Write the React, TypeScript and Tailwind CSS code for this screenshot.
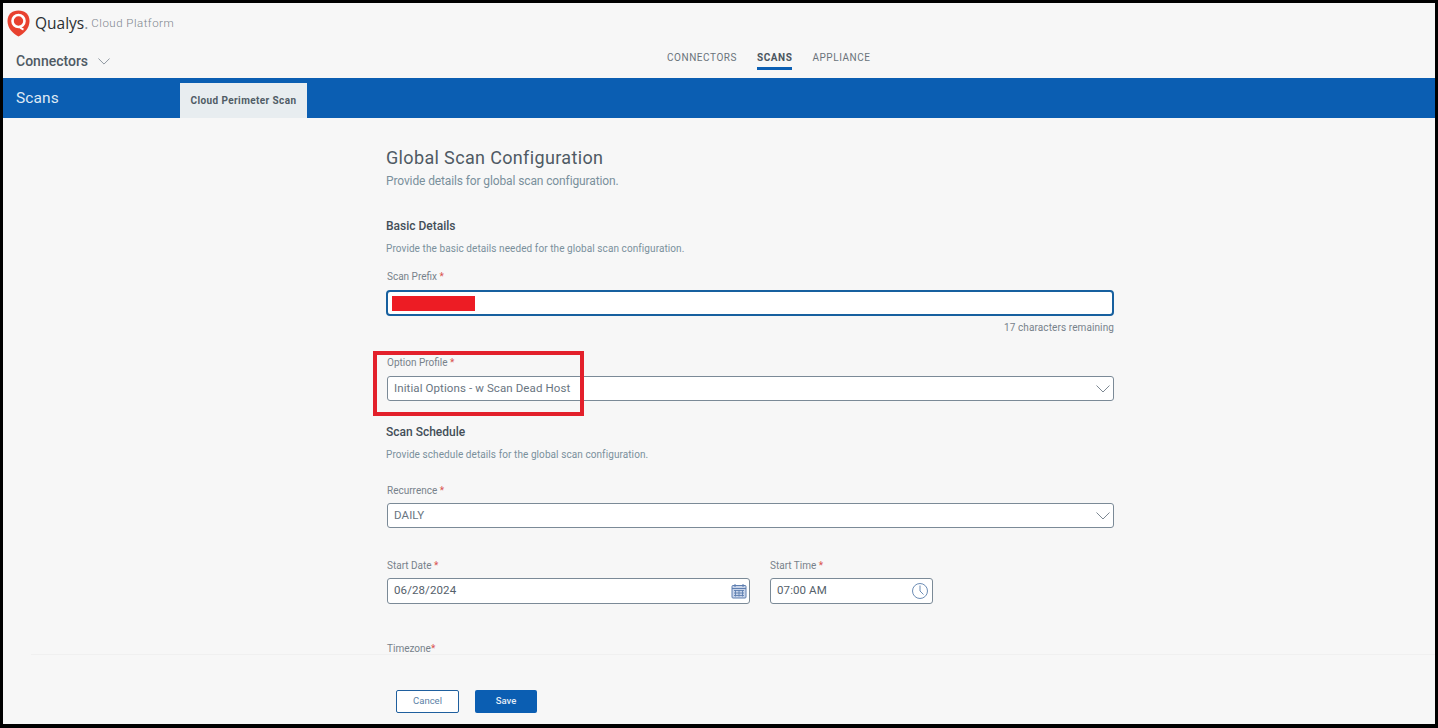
function Chevron({ w = 14, h = 8 }: { w?: number; h?: number }) {
  return (
    <svg width={w} height={h} viewBox="0 0 14 8" fill="none" stroke="#7d8892" strokeWidth="1">
      <path d="M0.500 0.500L7 7l6.500-6.500" />
    </svg>
  );
}

function Label({ text, star = ' *', inset = true }: { text: string; star?: string; inset?: boolean }) {
  return (
    <div className={inset ? 'h-[14px] pl-px text-[10px] leading-[14px] text-[#77828b]' : 'h-[14px] text-[10px] leading-[14px] text-[#77828b]'}>
      {text}
      <span className="text-[#d9534f]">{star}</span>
    </div>
  );
}

function SelectBox({ value }: { value: string }) {
  return (
    <div className="ml-px flex h-[25px] items-center justify-between rounded-[3px] border border-[#7b8a97] bg-white pl-[6px] pr-[3px] text-[11.500px] tracking-[0.1px] text-[#69757f]">
      <span>{value}</span>
      <Chevron />
    </div>
  );
}

function CalendarIcon() {
  return (
    <svg width="16" height="16" viewBox="0 0 16 16" fill="none" stroke="#5f7fb0" strokeWidth="1">
      <rect x="1" y="2.500" width="14" height="12.500" rx="1" fill="#c9d5ea" />
      <path d="M1 5.500h14M4 1v3M12 1v3" />
      <path d="M3 7.500h10M3 10h10M3 12.500h10M4.500 7v6.500M8 7v6.500M11.500 7v6.500" strokeWidth="0.9" />
    </svg>
  );
}

function ClockIcon() {
  return (
    <svg width="18" height="18" viewBox="0 0 18 18" fill="none" stroke="#6d8db5" strokeWidth="1">
      <circle cx="9" cy="9" r="7.500" />
      <path d="M9 3.500V9l3.500 3.500" />
    </svg>
  );
}

export default function App() {
  return (
    <div className="flex h-[728px] w-[1438px] flex-col overflow-hidden border-b-[4px] border-l-[3px] border-r-[3px] border-t-[3px] border-black bg-[#f7f7f7] font-['Roboto',sans-serif]">
      {/* Logo row */}
      <div className="flex h-[41px] items-center pl-[4px]">
        <svg width="23" height="27" viewBox="0 0 23 27">
          <path
            d="M11.500 0.500C5 0.500 0.500 4.500 0.500 11c0 7 5 12.500 11 15.500 6-3 11-8.500 11-15.500 0-6.500-4.500-10.500-11-10.500z"
            fill="#e8412f"
          />
          <circle cx="11.500" cy="11" r="6" fill="none" stroke="#fff" strokeWidth="2.600" />
          <path d="M12 16.500c1.500 1.500 3 2.500 4.500 3" stroke="#fff" strokeWidth="2" fill="none" />
        </svg>
        <span className="ml-[5px] text-[15.500px] font-medium leading-none text-[#2b2f33] font-['Open_Sans',sans-serif]">
          Qualys<span className="text-[#8a9299]">.</span>
        </span>
        <span className="ml-[3px] text-[11.500px] font-light leading-none tracking-[0.5px] text-[#7d868d]">
          Cloud Platform
        </span>
      </div>

      {/* Module row */}
      <div className="relative flex h-[34px] items-center pl-[13px]">
        <span className="text-[14px] font-medium text-[#4f5a64]">Connectors</span>
        <span className="ml-[10px]">
          <Chevron w={12} h={7} />
        </span>
        <nav className="absolute left-[664px] top-0 flex gap-[20px] text-[10px] tracking-[0.55px] text-[#6a737b]">
          <span className="h-[26px] pt-[6px]">CONNECTORS</span>
          <span className="h-[26px] border-b-[3px] border-[#0b5fb3] pt-[6px] font-bold text-[#4b5660]">SCANS</span>
          <span className="h-[26px] pt-[6px]">APPLIANCE</span>
        </nav>
      </div>

      {/* Blue bar */}
      <div className="flex h-[40px] items-end bg-[#0b5eb2] pl-[13px]">
        <span className="mb-[10px] w-[164px] text-[15.500px] leading-[20px] tracking-[0.1px] text-[#dfe9f5]">Scans</span>
        <div className="flex h-[35px] w-[127px] items-center justify-center bg-[#e8edf0] text-[10px] font-bold tracking-[0.4px] text-[#505c66]">
          Cloud Perimeter Scan
        </div>
      </div>

      {/* Form */}
      <main className="relative min-h-0 flex-1 overflow-hidden pl-[383px]">
        <div className="w-[728px] pt-[29px]">
          <h1 className="text-[18px] leading-[22px] tracking-[0.35px] text-[#4f5a64]">Global Scan Configuration</h1>
          <p className="mt-[5px] text-[12px] leading-[14px] tracking-[-0.12px] text-[#7a909c]">
            Provide details for global scan configuration.
          </p>

          <h2 className="mt-[30px] text-[12px] font-medium leading-[16px] text-[#434e57]">Basic Details</h2>
          <p className="mt-[8px] text-[10px] leading-[14px] tracking-[0.08px] text-[#7a909c]">
            Provide the basic details needed for the global scan configuration.
          </p>
          <div className="mt-[14px]">
            <Label text="Scan Prefix" />
          </div>
          <div className="mt-[6px] flex h-[26px] items-center rounded-[4px] border-2 border-[#17609f] bg-white pl-[4px]">
            <div className="h-[15px] w-[83px] bg-[#ed1c24]" />
          </div>
          <div className="mt-[5px] text-right text-[10px] leading-[14px] tracking-[0.1px] text-[#77828b]">
            17 characters remaining
          </div>

          <div className="mt-[21px]">
            <Label text="Option Profile" />
          </div>
          <div className="mt-[6px]">
            <SelectBox value="Initial Options - w Scan Dead Host" />
          </div>

          <h2 className="mt-[23px] text-[12px] font-medium leading-[16px] text-[#434e57]">Scan Schedule</h2>
          <p className="mt-[8px] text-[10px] leading-[14px] tracking-[0.08px] text-[#7a909c]">
            Provide schedule details for the global scan configuration.
          </p>

          <div className="mt-[22px]">
            <Label text="Recurrence" />
          </div>
          <div className="mt-[5px]">
            <SelectBox value="DAILY" />
          </div>

          <div className="mt-[31px] flex gap-[20px] pl-px">
            <div className="w-[363px]">
              <Label text="Start Date" inset={false} />
              <div className="mt-[5px] flex h-[26px] items-center justify-between rounded-[3px] border border-[#7b8a97] bg-white pl-[6px] pr-[2px] text-[11.500px] tracking-[0.1px] text-[#55616b]">
                <span>06/28/2024</span>
                <CalendarIcon />
              </div>
            </div>
            <div className="w-[163px]">
              <Label text="Start Time" inset={false} />
              <div className="mt-[5px] flex h-[26px] items-center justify-between rounded-[3px] border border-[#7b8a97] bg-white pl-[6px] pr-[3px] text-[11.500px] tracking-[0.1px] text-[#55616b]">
                <span>07:00 AM</span>
                <ClockIcon />
              </div>
            </div>
          </div>

          <div className="mt-[38px]">
            <Label text="Timezone" star="*" />
          </div>
        </div>

        {/* Red annotation */}
        <div className="absolute left-[370px] top-[233px] h-[65px] w-[211px] border-[4px] border-[#e3202b]" />
      </main>

      {/* Footer */}
      <footer className="ml-[28px] flex h-[70px] shrink-0 items-start gap-[16px] border-t border-[#f0f0f0] pl-[365px] pt-[35px]">
        <button className="h-[23px] w-[63px] rounded-[2px] border border-[#1f5f9e] bg-white text-[9.500px] text-[#5b7fa6]">
          Cancel
        </button>
        <button className="h-[23px] w-[62px] rounded-[2px] bg-[#0b5eb2] text-[9.500px] font-medium text-[#e4edf7]">
          Save
        </button>
      </footer>
    </div>
  );
}
